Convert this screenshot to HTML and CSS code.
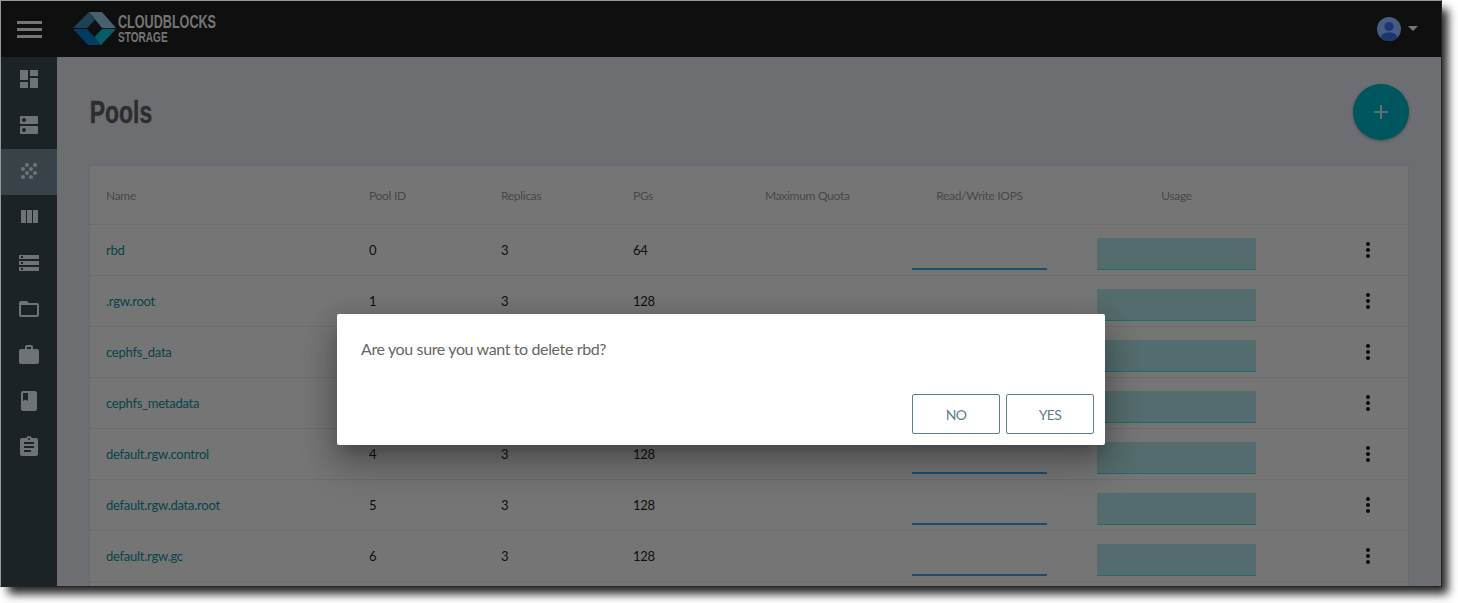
FILE: index.html
```html
<!DOCTYPE html>
<html lang="en">
<head>
<meta charset="utf-8">
<title>Pools</title>
<link rel="stylesheet" href="styles.css">
</head>
<body>
<div class="window">
  <header class="topbar">
    <svg class="burger" width="25" height="17" viewBox="0 0 25 17"><path d="M0 0h25v3H0zM0 7h25v3H0zM0 14h25v3H0z"/></svg>
    <svg class="logo" width="43" height="33" viewBox="0 0 43 33">
      <path fill="#1c4254" d="M0 16L16 0 22 8 14 16z"/>
      <path fill="#48616f" d="M16 0H29L43 16H29z"/>
      <path fill="#043b63" d="M0 17H14L29 33H15z"/>
      <path fill="#065c67" d="M43 17H29L21.5 25 28 33z"/>
    </svg>
    <div class="brand"><span class="brand-top">CLOUDBLOCKS</span><span class="brand-sub">STORAGE</span></div>
    <div class="account">
      <svg width="26" height="26" viewBox="0 0 26 26"><defs><clipPath id="face"><circle cx="13" cy="13" r="12"/></clipPath></defs><circle cx="13" cy="13" r="12" fill="#485c83"/><g fill="#1d3570" clip-path="url(#face)"><circle cx="13" cy="10.5" r="4.6"/><path d="M5 23v-2c0-3 4-4.500 8-4.500s8 1.500 8 4.500v4H5z"/></g></svg>
      <svg width="10" height="5" viewBox="0 0 10 5"><path fill="#757575" d="M0 0h10L5 5z"/></svg>
    </div>
  </header>
  <div class="body">
    <nav class="sidebar">
      <a class="item"><svg viewBox="0 0 24 24"><path d="M3 13h8V3H3v10zm0 8h8v-6H3v6zm10 0h8V11h-8v10zm0-18v6h8V3h-8z"/></svg></a>
      <a class="item"><svg viewBox="0 0 24 24"><path d="M20 13H4c-.55 0-1 .45-1 1v6c0 .55.45 1 1 1h16c.55 0 1-.45 1-1v-6c0-.55-.45-1-1-1zM7 19c-1.100 0-2-.9-2-2s.9-2 2-2 2 .9 2 2-.9 2-2 2zM20 3H4c-.55 0-1 .45-1 1v6c0 .55.45 1 1 1h16c.55 0 1-.45 1-1V4c0-.55-.45-1-1-1zM7 9c-1.100 0-2-.9-2-2s.9-2 2-2 2 .9 2 2-.9 2-2 2z"/></svg></a>
      <a class="item active"><svg viewBox="0 0 24 24"><circle cx="10" cy="6" r="2"/><circle cx="18" cy="6" r="2"/><circle cx="6" cy="10" r="2"/><circle cx="14" cy="10" r="2"/><circle cx="10" cy="14" r="2"/><circle cx="18" cy="14" r="2"/><circle cx="6" cy="18" r="2"/><circle cx="14" cy="18" r="2"/></svg></a>
      <a class="item"><svg viewBox="0 0 24 24"><path d="M10 18h5V5h-5v13zm-6 0h5V5H4v13zM16 5v13h5V5h-5z"/></svg></a>
      <a class="item"><svg viewBox="0 0 24 24"><path d="M2 20h20v-4H2v4zm2-3h2v2H4v-2zM2 4v4h20V4H2zm4 3H4V5h2v2zm-4 7h20v-4H2v4zm2-3h2v2H4v-2z"/></svg></a>
      <a class="item"><svg viewBox="0 0 24 24"><path d="M20 6h-8l-2-2H4c-1.100 0-1.990.9-1.990 2L2 18c0 1.100.9 2 2 2h16c1.100 0 2-.9 2-2V8c0-1.100-.9-2-2-2zm0 12H4V8h16v10z"/></svg></a>
      <a class="item"><svg viewBox="0 0 24 24"><path d="M20 6h-4V4c0-1.110-.89-2-2-2h-4c-1.110 0-2 .89-2 2v2H4c-1.110 0-1.990.89-1.990 2L2 19c0 1.110.89 2 2 2h16c1.110 0 2-.89 2-2V8c0-1.110-.89-2-2-2zm-6 0h-4V4h4v2z"/></svg></a>
      <a class="item"><svg viewBox="0 0 24 24"><path d="M18 2H6c-1.100 0-2 .9-2 2v16c0 1.100.9 2 2 2h12c1.100 0 2-.9 2-2V4c0-1.100-.9-2-2-2zM6 4h5v8l-2.500-1.500L6 12V4z"/></svg></a>
      <a class="item"><svg viewBox="0 0 24 24"><path d="M19 3h-4.180C14.400 1.840 13.300 1 12 1c-1.300 0-2.400.84-2.820 2H5c-1.100 0-2 .9-2 2v14c0 1.100.9 2 2 2h14c1.100 0 2-.9 2-2V5c0-1.100-.9-2-2-2zm-7 0c.55 0 1 .45 1 1s-.45 1-1 1-1-.45-1-1 .45-1 1-1zm2 14H7v-2h7v2zm3-4H7v-2h10v2zm0-4H7V7h10v2z"/></svg></a>
    </nav>
    <main class="main">
      <div class="heading">
        <h1>Pools</h1>
        <div class="add"><svg width="14" height="14" viewBox="0 0 14 14"><path d="M6.200 0h1.600v6.200H14v1.600H7.800V14H6.200V7.800H0V6.200h6.200z"/></svg></div>
      </div>
      <section class="table">
        <div class="row head"><span>Name</span><span>Pool ID</span><span>Replicas</span><span>PGs</span><span>Maximum Quota</span><span class="center">Read/Write IOPS</span><span class="center usage-col">Usage</span></div>
        <div class="row"><a>rbd</a><span>0</span><span>3</span><span>64</span><span></span><i class="iops"></i><i class="usage usage-col"></i><b class="dots"><i></i><i></i><i></i></b></div>
        <div class="row"><a>.rgw.root</a><span>1</span><span>3</span><span>128</span><span></span><i class="iops"></i><i class="usage usage-col"></i><b class="dots"><i></i><i></i><i></i></b></div>
        <div class="row"><a>cephfs_data</a><span></span><span></span><span></span><span></span><i class="iops"></i><i class="usage usage-col"></i><b class="dots"><i></i><i></i><i></i></b></div>
        <div class="row"><a>cephfs_metadata</a><span></span><span></span><span></span><span></span><i class="iops"></i><i class="usage usage-col"></i><b class="dots"><i></i><i></i><i></i></b></div>
        <div class="row"><a>default.rgw.control</a><span>4</span><span>3</span><span>128</span><span></span><i class="iops"></i><i class="usage usage-col"></i><b class="dots"><i></i><i></i><i></i></b></div>
        <div class="row"><a>default.rgw.data.root</a><span>5</span><span>3</span><span>128</span><span></span><i class="iops"></i><i class="usage usage-col"></i><b class="dots"><i></i><i></i><i></i></b></div>
        <div class="row"><a>default.rgw.gc</a><span>6</span><span>3</span><span>128</span><span></span><i class="iops"></i><i class="usage usage-col"></i><b class="dots"><i></i><i></i><i></i></b></div>
        <div class="row"></div>
      </section>
    </main>
  </div>
  <div class="dialog">
    <p>Are you sure you want to delete rbd?</p>
    <div class="actions"><button>NO</button><button>YES</button></div>
  </div>
</div>
</body>
</html>
```
FILE: styles.css
```css
* { box-sizing: border-box; }
body { margin: 0; height: 603px; overflow: hidden; background: #fff; font-family: Lato, sans-serif; }
.window { position: relative; width: 1442px; height: 587px; display: flex; flex-direction: column; border: 1px solid; border-color: #979999 #262626 #262626 #979999; box-shadow: 7px 8px 9px -1px rgba(0,0,0,.85); }
.topbar { height: 56px; flex: none; background: #0f0f0f; display: flex; align-items: center; padding: 0 23px 0 16px; }
.burger { fill: #757575; }
.logo { margin-left: 31px; margin-bottom: 1px; }
.brand { margin-left: 2px; display: flex; flex-direction: column; align-items: flex-start; color: #757575; font-family: "Liberation Sans", sans-serif; font-weight: 700; white-space: nowrap; transform: scaleX(.72); transform-origin: left; }
.brand-top { font-size: 17.500px; line-height: 16px; }
.brand-sub { font-size: 14px; line-height: 14px; margin-bottom: 1px; }
.account { margin-left: auto; display: flex; align-items: center; gap: 6px; padding-bottom: 1px; }
.body { flex: 1; min-height: 0; display: flex; overflow: hidden; }
.sidebar { width: 56px; flex: none; background: #1b2326; }
.item { height: 46px; display: flex; align-items: center; justify-content: center; padding-bottom: 2px; }
.item svg { width: 24px; height: 24px; fill: #707376; }
.active { background: #384349; }
.main { flex: 1; min-width: 0; background: #6c6e71; padding: 27px 32px 0; }
.heading { height: 56px; display: flex; align-items: center; justify-content: space-between; }
h1 { margin: 0; padding: 2px 0 0 1px; color: #2d2d2e; font: 700 31px "Liberation Sans", sans-serif; -webkit-text-stroke: .4px #2d2d2e; transform: scaleX(.74); transform-origin: left; }
.add { width: 56px; height: 56px; border-radius: 50%; background: #00565f; display: flex; align-items: center; justify-content: center; box-shadow: 0 1px 3px rgba(0,0,0,.3); }
.add svg { fill: #757575; }
.table { margin-top: 25px; width: 1320px; background: #757575; border: 1px solid #646b6d; }
.row { height: 51px; display: grid; grid-template-columns: 263px 132px 132px 132px 147px 135px 209px 1fr; align-items: center; padding-left: 16px; border-bottom: 1px solid #6d6d6d; font-size: 13px; letter-spacing: -.25px; color: #0f0f0f; white-space: nowrap; }
.row a { color: #06444a; }
.head { height: 59px; padding-top: 1px; font-size: 12px; letter-spacing: -.3px; color: #484848; }
.center { text-align: center; }
.usage-col { margin-left: 50px; }
.iops { align-self: end; height: 2px; margin-bottom: 5px; background: #1c4e70; }
.usage { align-self: end; height: 32px; margin-bottom: 5px; background: #546c6d; border-bottom: 1px solid #226b66; }
.dots { display: flex; flex-direction: column; gap: 2px; margin-left: 110px; }
.dots i { width: 4px; height: 4px; border-radius: 50%; background: #0a0a0a; }
.dialog { position: absolute; left: 336px; top: 313px; width: 768px; height: 131px; background: #fff; border-radius: 2px; padding: 23px 11px 11px 24px; box-shadow: 0 11px 15px -7px rgba(0,0,0,.2), 0 24px 38px 3px rgba(0,0,0,.14), 0 9px 30px 4px rgba(0,0,0,.2); display: flex; flex-direction: column; justify-content: space-between; }
.dialog p { margin: 0; font-size: 16px; line-height: 24px; letter-spacing: -.37px; color: #666; }
.actions { display: flex; justify-content: flex-end; gap: 6px; }
button { width: 88px; height: 40px; padding: 1px 0 0; background: #fff; border: 1px solid #607d8b; border-radius: 2px; color: #607d8b; font: 14px Lato, sans-serif; letter-spacing: -.7px; }
```
